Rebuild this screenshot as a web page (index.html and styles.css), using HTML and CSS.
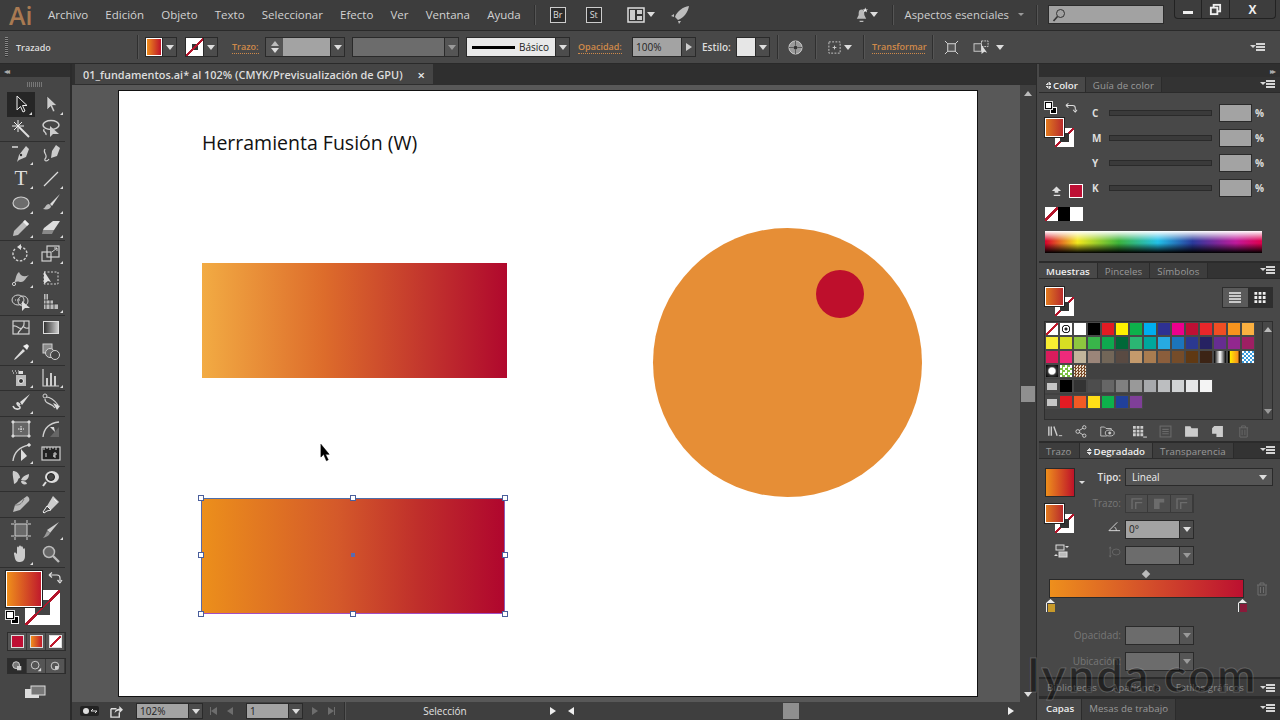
FILE: index.html
```html
<!DOCTYPE html>
<html lang="es">
<head>
  <meta charset="UTF-8">
  <title>Illustrator</title>
  <link rel="stylesheet" href="styles.css">
</head>
<body>
<div class="app">

  <!-- Menu bar -->
  <header class="menubar">
    <span class="logo">Ai</span>
    <nav class="menu">
      <span>Archivo</span><span>Edición</span><span>Objeto</span><span>Texto</span><span>Seleccionar</span><span>Efecto</span><span>Ver</span><span>Ventana</span><span>Ayuda</span>
    </nav>
    <i class="vline menu-div"></i>
    <span class="appbox br">Br</span>
    <span class="appbox st">St</span>
    <svg class="ic layout-ic" viewBox="0 0 18 16"><rect x="1" y="1" width="16" height="14" fill="#333" stroke="#ddd" stroke-width="1.5"/><rect x="3" y="3" width="5" height="10" fill="#ccc" stroke="none"/><rect x="10" y="3" width="5" height="4" fill="#ccc" stroke="none"/><rect x="10" y="9" width="5" height="4" fill="#ccc" stroke="none"/></svg>
    <i class="tri light"></i>
    <svg class="ic rocket" viewBox="0 0 20 20"><path d="M19 1C13 2 7 6 5 12l3 3c6-2 10-8 11-14zM4 9 1 11l3 1zM11 16l-2 3-1-3z" fill="#bdbdbd" stroke="none"/></svg>
    <div class="menu-right">
      <svg class="ic bell" viewBox="0 0 16 18"><path d="M8 3c-3 0-3 3-3 6L3 13h10l-2-4c0-3 0-6-3-6zM6 15h4v1.500H6z" fill="#bbb" stroke="none"/><path d="m12 1 .8 2H15l-1.700 1.300.6 2-1.900-1.200-1.900 1.200.6-2L9 3h2.200z" fill="#eee" stroke="none"/></svg>
      <i class="tri light"></i>
      <i class="vline bell-div"></i>
      <span class="workspace-name">Aspectos esenciales</span>
      <i class="tri small"></i>
      <i class="vline ws-div"></i>
      <div class="search">
        <svg class="ic" viewBox="0 0 14 14"><circle cx="8.500" cy="5.500" r="4" stroke="#333"/><path d="M5.500 8.500 1.500 13" stroke="#333" stroke-width="1.600"/></svg>
      </div>
      <div class="winbtns">
        <span class="winbtn"><i class="min-bar"></i></span>
        <span class="winbtn">
          <svg class="ic" viewBox="0 0 14 14"><rect x="5" y="2" width="7" height="7" stroke="#eee" stroke-width="2"/><rect x="2" y="5" width="7" height="7" fill="#444" stroke="#eee" stroke-width="2"/></svg>
        </span>
        <span class="winbtn close">X</span>
      </div>
    </div>
  </header>

  <!-- Control bar -->
  <div class="controlbar">
    <i class="grip"></i>
    <span class="ctl-title">Trazado</span>
    <i class="vline c-div1"></i>
    <div class="combo c-fill"><span class="mini-fill"></span><b class="drop"><i class="tri light"></i></b></div>
    <div class="combo c-stroke"><span class="mini-stroke"></span><b class="drop"><i class="tri light"></i></b></div>
    <span class="link-label c-trazo">Trazo:</span>
    <div class="combo c-weight">
      <span class="stepper"><i class="tri up"></i><i class="tri light"></i></span>
      <span class="field w-weight"></span>
      <b class="drop"><i class="tri light"></i></b>
    </div>
    <div class="combo off c-var"><span class="field w-var"></span><b class="drop"><i class="tri"></i></b></div>
    <div class="combo c-basic">
      <span class="basic"><i class="basic-line"></i>Básico</span>
      <b class="drop"><i class="tri light"></i></b>
    </div>
    <span class="link-label c-opac">Opacidad:</span>
    <div class="combo c-pct"><span class="field w-pct">100%</span><b class="drop"><i class="tri right"></i></b></div>
    <span class="ctl-label c-estilo">Estilo:</span>
    <div class="combo"><span class="style-box"></span><b class="drop"><i class="tri light"></i></b></div>
    <i class="vline c-div2"></i>
    <svg class="ic c-globe" viewBox="0 0 16 16"><circle cx="8" cy="8" r="7" fill="#999" stroke="#ccc"/><circle cx="8" cy="8" r="2" fill="#333" stroke="none"/><path d="M8 1v5M8 10v5M1 8h5M10 8h5" stroke="#555"/></svg>
    <i class="vline c-div3"></i>
    <svg class="ic c-align" viewBox="0 0 16 16"><rect x="2" y="2" width="12" height="12" stroke="#ccc" stroke-dasharray="2 1.500"/><path d="M6 8h4M8 6v4" stroke="#ccc"/></svg>
    <i class="tri light c-tri1"></i>
    <i class="vline c-div4"></i>
    <span class="link-label c-transf">Transformar</span>
    <i class="vline c-div5"></i>
    <svg class="ic c-t1" viewBox="0 0 16 16"><rect x="4" y="4" width="8" height="8" fill="#555" stroke="#ddd"/><path d="m1 1 3 3M15 1l-3 3M1 15l3-3M15 15l-3-3" stroke="#ddd"/></svg>
    <svg class="ic c-t2" viewBox="0 0 18 16"><rect x="1" y="4" width="8" height="8" fill="#555" stroke="#ccc"/><rect x="9" y="1" width="7" height="6" stroke="#ccc" stroke-dasharray="2 1"/><path d="m9 5 0 10 3-2.500 3 1z" fill="#ddd" stroke="none"/></svg>
    <i class="tri light c-tri2"></i>
    <span class="panel-menu c-menu"><i></i><i></i><i></i></span>
  </div>

  <div class="workspace">

    <!-- Tool panel -->
    <aside class="toolbox">
      <div class="tb-head"><span class="collapse">◂◂</span></div>
      <div class="tb-grip"></div>

      <div class="tgroup">
        <span class="tool active more"><svg class="ic" viewBox="0 0 20 20"><path d="M6 2v14l3.500-3.500L12 18l2-1-2.500-5.500H16z" fill="#222" stroke="#eee"/></svg></span>
        <span class="tool more"><svg class="ic" viewBox="0 0 20 20"><path d="M6 2v14l3.500-3.500L12 18l2-1-2.500-5.500H16z" fill="#ccc" stroke="#333" stroke-width=".6"/></svg></span>
        <span class="tool"><svg class="ic" viewBox="0 0 20 20"><path d="m8 8 10 10" stroke="#ddd" stroke-width="2"/><path d="M7 1v12M1 7h12M3 3l8 8M11 3l-8 8" stroke="#eee"/></svg></span>
        <span class="tool"><svg class="ic" viewBox="0 0 20 20"><ellipse cx="10" cy="6" rx="8" ry="4.500" stroke-width="1.500"/><path d="M3 10c-2 3 3 3 2 6" stroke-width="1.300"/><path d="M9 7v11l3-3h6z" fill="#ccc" stroke="none"/></svg></span>
      </div>

      <div class="tgroup">
        <span class="tool more"><svg class="ic" viewBox="0 0 20 20"><path d="M1 3h6" stroke="#ddd" stroke-width="1.500"/><path d="m15 2 3 3-3 8-7 3-2 2 2-7z" fill="#ccc" stroke="none"/><circle cx="10" cy="11" r="1.200" fill="#333" stroke="none"/></svg></span>
        <span class="tool"><svg class="ic" viewBox="0 0 20 20"><path d="m15 1 4 3-3 8-6 2 1-7z" fill="#ccc" stroke="none"/><path d="M4 5C1 9 8 11 4 15c-1 2 2 3 4 0" stroke-width="1.200"/></svg></span>
        <span class="tool more type-tool">T</span>
        <span class="tool more"><svg class="ic" viewBox="0 0 20 20"><path d="M3 17 17 3" stroke="#ddd" stroke-width="1.300"/></svg></span>
        <span class="tool more"><svg class="ic" viewBox="0 0 20 20"><ellipse cx="10" cy="10" rx="8" ry="6" fill="#6c6c6c" stroke="#ccc" stroke-width="1.200"/></svg></span>
        <span class="tool more"><svg class="ic" viewBox="0 0 20 20"><path d="M19 1 9 11l2 2z" fill="#ddd" stroke="none"/><path d="M8 11c-3 0-3 3-6 5 4 1 8 0 8-3z" fill="#bbb" stroke="none"/></svg></span>
        <span class="tool more"><svg class="ic" viewBox="0 0 20 20"><path d="m14 2 4 4-11 11-5 1 1-5z" fill="#bbb" stroke="none"/><path d="m14 2 4 4-2 2-4-4z" fill="#eee" stroke="none"/></svg></span>
        <span class="tool more"><svg class="ic" viewBox="0 0 20 20"><path d="m12 3 7 0-6 9H2l1-2z" fill="#ddd" stroke="none"/><path d="M2 12h11l-2 4H1z" fill="#888" stroke="none"/></svg></span>
      </div>

      <div class="tgroup">
        <span class="tool more"><svg class="ic" viewBox="0 0 20 20"><path d="M4 6a7 7 0 1 0 6-2" stroke-width="1.400" stroke-dasharray="2.500 1.500"/><path d="m10 1-4 3 4 3z" fill="#ddd" stroke="none"/></svg></span>
        <span class="tool more"><svg class="ic" viewBox="0 0 20 20"><rect x="1" y="9" width="9" height="9" stroke-width="1.200"/><rect x="6" y="3" width="12" height="11" stroke-width="1.200"/><path d="m11 9 5-4M13 5h3v3"/></svg></span>
        <span class="tool more"><svg class="ic" viewBox="0 0 20 20"><path d="M2 16c3-2 2-9 6-12 2 5 6 5 10 3-3 2-4 7-8 7-3 0-3-2-8 2z" fill="#bbb" stroke="none"/><circle cx="3" cy="16" r="1.600" fill="#444"/></svg></span>
        <span class="tool"><svg class="ic" viewBox="0 0 20 20"><rect x="3" y="4" width="14" height="12" stroke-dasharray="2 1.500"/><path d="M3 3v13l4-3 3 1z" fill="#ddd" stroke="none"/></svg></span>
        <span class="tool"><svg class="ic" viewBox="0 0 20 20"><ellipse cx="7" cy="8" rx="6" ry="5"/><circle cx="12" cy="9" r="5"/><path d="M11 9v10l3-3h5z" fill="#ddd" stroke="none"/><path d="M4 8h6" stroke-dasharray="1 1"/></svg></span>
        <span class="tool more"><svg class="ic" viewBox="0 0 20 20"><path d="M3 2h4v6h5v4h5v5H3z" fill="#bbb" stroke="none"/><path d="M5 2v15M9 8v9M13 12v5M3 8h9M3 12h14" stroke="#333" stroke-width=".8"/></svg></span>
      </div>

      <div class="tgroup">
        <span class="tool"><svg class="ic" viewBox="0 0 20 20"><rect x="2" y="3" width="16" height="13" stroke-width="1.200"/><path d="M2 8c5-1 6 4 9 2s2-5 2-7M7 16c0-3 3-4 4-6M13 9c2 2 3 1 5 1" stroke-width="1.100"/></svg></span>
        <span class="tool"><i class="grad-tool"></i></span>
        <span class="tool more"><svg class="ic" viewBox="0 0 20 20"><path d="m12 7-8 9-1 2 2-1 9-8z" fill="#ddd" stroke="none"/><path d="m12 4 4 4 2-4-2-2z" fill="#eee" stroke="none"/></svg></span>
        <span class="tool"><svg class="ic" viewBox="0 0 20 20"><rect x="2" y="2" width="9" height="9" fill="#888"/><circle cx="9" cy="11" r="4.500" fill="#666"/><circle cx="14" cy="13" r="4.500" fill="#444"/></svg></span>
      </div>

      <div class="tgroup">
        <span class="tool more"><svg class="ic" viewBox="0 0 20 20"><rect x="5" y="7" width="10" height="11" fill="#bbb" stroke="none"/><circle cx="10" cy="13" r="2.500" fill="#333" stroke="#eee"/><path d="M1 3h1M4 3h1M7 3h1M2 5h1M5 5h1M7 5h1" stroke="#eee"/><rect x="8" y="3" width="4" height="3" fill="#ddd" stroke="none"/></svg></span>
        <span class="tool more"><svg class="ic" viewBox="0 0 20 20"><path d="M2 1v17h16" stroke-width="1.200"/><path d="M5 10h2v8H5zM9 5h2v13H9zM13 8h2v10h-2z" fill="#ccc" stroke="none"/></svg></span>
      </div>

      <div class="tgroup">
        <span class="tool more"><svg class="ic" viewBox="0 0 20 20"><path d="M2 13c2 5 10 3 6 0C4 10 7 8 9 12" stroke-width="1.600" stroke="#ddd"/><path d="M19 1 9 9l2 3z" fill="#ddd" stroke="none"/></svg></span>
        <span class="tool"><svg class="ic" viewBox="0 0 20 20"><circle cx="4" cy="3" r="2"/><path d="M4 6c0 6 6 3 10 9M5 4c5 0 9 4 12 8" stroke-width="1.200"/><path d="m12 10 7 3-3 4z" fill="#ddd" stroke="none"/></svg></span>
      </div>

      <div class="tgroup">
        <span class="tool"><svg class="ic" viewBox="0 0 20 20"><rect x="2" y="3" width="16" height="14" rx="1" fill="#666" stroke-width="1.200"/><path d="M10 7v6M7 10h6" stroke="#eee" stroke-dasharray="1.500 1"/><path d="M1 2h2v2H1zM17 2h2v2h-2zM1 16h2v2H1zM17 16h2v2h-2z" fill="#eee"/></svg></span>
        <span class="tool"><svg class="ic" viewBox="0 0 20 20"><path d="M2 18C3 9 8 4 18 3" stroke-width="1.300"/><path d="M9 18h9V8z" fill="#666" stroke="none"/><path d="m9 8 5 5-1-5z" fill="#ddd" stroke="none"/></svg></span>
        <span class="tool more"><svg class="ic" viewBox="0 0 20 20"><path d="M2 18C3 9 8 4 18 2M2 18v-1" stroke-width="1.300"/><path d="M10 6v12l6-5z" fill="#ddd" stroke="none"/><circle cx="18" cy="2" r="1.300" fill="#eee"/></svg></span>
        <span class="tool"><svg class="ic" viewBox="0 0 20 20"><rect x="1" y="4" width="18" height="13" fill="#222" stroke-width="1.200"/><path d="M3 4v3M6 4v2M9 4v3M12 4v2M15 4v3M5 14v-4M13 14v-4h2v2h-2v2h2" stroke-width="1"/></svg></span>
      </div>

      <div class="tgroup">
        <span class="tool"><svg class="ic" viewBox="0 0 20 20"><path d="M2 2c3 0 6 2 7 6 0 2-1 0-2 3-1 3-4 4-4 4 0-4-2-9-1-13zM18 5c0 4-2 8-8 6 1-3 4-5 8-6zM10 12c3 0 5 0 6 3-3 1-6 0-6-3z" fill="#ccc" stroke="none"/></svg></span>
        <span class="tool"><svg class="ic" viewBox="0 0 20 20"><ellipse cx="11" cy="8" rx="7" ry="6" fill="#ddd" stroke="none"/><circle cx="10" cy="8" r="3.500" fill="#444" stroke="#222"/><path d="m5 13-3 4" stroke="#ddd" stroke-width="2"/></svg></span>
      </div>

      <div class="tgroup">
        <span class="tool"><svg class="ic" viewBox="0 0 20 20"><path d="M16 2c2 1 3 3 2 5l-9 9-7 2 2-7z" fill="#bbb" stroke="none"/><path d="M4 11c4 0 6 0 9-6" stroke="#777"/></svg></span>
        <span class="tool"><svg class="ic" viewBox="0 0 20 20"><path d="m12 2 6 6-8 8-4-4z" fill="#ccc" stroke="none"/><path d="m6 12 4 4-4 1-3 2-1-1 2-3zM13 5l3 3" stroke="#eee"/></svg></span>
      </div>

      <div class="tgroup">
        <span class="tool"><svg class="ic" viewBox="0 0 20 20"><rect x="4" y="4" width="12" height="12" fill="#6a6a6a" stroke-width="1"/><path d="M4 0v3M16 0v3M4 17v3M16 17v3M0 4h3M0 16h3M17 4h3M17 16h3" stroke-width="1"/></svg></span>
        <span class="tool more"><svg class="ic" viewBox="0 0 20 20"><path d="M18 2 6 10l3 3z" fill="#ccc" stroke="none"/><path d="M6 11c-1 2-2 5-4 7 3-1 6-2 7-5z" fill="#999" stroke="none"/></svg></span>
        <span class="tool more"><svg class="ic" viewBox="0 0 20 20"><path d="M3 9c1-1 2 0 3 1V4c0-2 2-2 2 0V3c0-2 2-2 2 0v0c0-1 2-1 2 1v1c1-1 2-1 2 1v6c0 5-3 6-6 6-4 0-4-4-5-8z" fill="#ccc" stroke="none"/></svg></span>
        <span class="tool"><svg class="ic" viewBox="0 0 20 20"><circle cx="8" cy="8" r="5.500" fill="#666" stroke="#bbb" stroke-width="1.500"/><path d="m12 12 6 6" stroke="#bbb" stroke-width="2.400"/></svg></span>
      </div>

      <!-- Fill and stroke -->
      <div class="fillstroke">
        <span class="big-stroke"><i></i></span>
        <span class="big-fill"></span>
        <svg class="ic fs-swap" viewBox="0 0 14 14"><path d="M1 4h8c2 0 3 1 3 3v3M1 4l3-2.500M1 4l3 2.500M12 12l-2.500-3M12 12l2-3" stroke="#ddd" stroke-width="1.200"/></svg>
        <span class="fs-default"><i></i><i></i></span>
      </div>
      <div class="btnstrip modes">
        <span><i class="mode-red"></i></span><span><i class="mode-grad"></i></span><span><i class="mode-none"></i></span>
      </div>
      <div class="btnstrip draws">
        <span class="on"><svg class="ic" viewBox="0 0 14 14"><circle cx="6" cy="6" r="4" fill="#777" stroke="#ddd"/><rect x="7" y="7" width="5" height="5" fill="#ccc" stroke="none"/></svg></span>
        <span><svg class="ic" viewBox="0 0 14 14"><circle cx="6" cy="6" r="4.500" stroke="#ddd"/><path d="M13 9v4H9z" fill="#ddd" stroke="none"/></svg></span>
        <span><svg class="ic" viewBox="0 0 14 14"><circle cx="7" cy="7" r="4.500" stroke="#ddd"/><rect x="7" y="7" width="4" height="4" fill="#ccc" stroke="none"/></svg></span>
      </div>
      <svg class="ic screen-mode" viewBox="0 0 22 14"><rect x="1" y="4" width="14" height="9" fill="#ddd" stroke="none"/><rect x="7" y="1" width="14" height="9" fill="#777" stroke="#ddd"/></svg>
    </aside>

    <!-- Document -->
    <main class="document">
      <div class="tabbar">
        <div class="doc-tab"><span>01_fundamentos.ai* al 102% (CMYK/Previsualización de GPU)</span><span class="doc-close">×</span></div>
      </div>
      <div class="canvas-row">
        <div class="canvas">
          <div class="artboard">
            <h1 class="art-title">Herramienta Fusión (W)</h1>
            <div class="rect-top"></div>
            <div class="rect-sel">
              <i class="h tl"></i><i class="h tc"></i><i class="h tr"></i>
              <i class="h ml"></i><i class="center-dot"></i><i class="h mr"></i>
              <i class="h bl"></i><i class="h bc"></i><i class="h br-h"></i>
            </div>
            <div class="circle"></div>
            <div class="dot"></div>
            <svg class="cursor" viewBox="0 0 12 20"><path d="M1 1v14l3-3 3 7 2-1-3-6h4z" fill="#000" stroke="#000" stroke-width=".6"/></svg>
          </div>
        </div>
        <div class="vscroll"><i class="tri up sc-up"></i><b class="sc-thumb"></b><i class="tri light sc-down"></i></div>
      </div>
      <footer class="statusbar">
        <svg class="ic st-gear" viewBox="0 0 20 12"><rect x="0" y="1" width="19" height="10" rx="2" fill="#222" stroke="none"/><circle cx="6" cy="6" r="3" fill="#ddd" stroke="none"/><path d="M11 6h6M11 6l2-2M17 6l-2 2" stroke="#ddd"/></svg>
        <svg class="ic st-share" viewBox="0 0 14 14"><path d="M1 4h6M1 4v9h9V8" stroke="#ddd" stroke-width="1.500"/><path d="M5 9c0-4 3-5 5-5V1l4 4-4 4V6C8 6 6 7 5 9z" fill="#ddd" stroke="none"/></svg>
        <div class="combo st-zoom"><span class="field w-zoom">102%</span><b class="drop"><i class="tri light"></i></b></div>
        <span class="st-nav dim"><i class="bar"></i><i class="tri left"></i><i class="tri left gap"></i></span>
        <div class="combo st-page"><span class="field w-page">1</span><b class="drop"><i class="tri light"></i></b></div>
        <span class="st-nav dim next"><i class="tri right"></i><i class="tri right gap"></i><i class="bar"></i></span>
        <i class="vline st-div"></i>
        <span class="st-label">Selección</span>
        <i class="tri right light st-arrow"></i>
        <div class="hscroll"><i class="tri left light"></i><b class="hs-thumb"></b><i class="tri right light"></i></div>
      </footer>
    </main>

    <!-- Panels -->
    <aside class="panels">
      <div class="dock-head"><span class="collapse">▸▸</span></div>

      <section class="panel p-color">
        <div class="tabs">
          <span class="tab on"><em class="updown"></em>Color</span><span class="tab">Guía de color</span>
          <span class="panel-menu"><i></i><i></i><i></i></span>
        </div>
        <div class="color-body">
          <div class="color-left">
            <div class="mini-icons">
              <span class="fs-default small"><i></i><i></i></span>
              <svg class="ic" viewBox="0 0 14 14"><path d="M1 4h8c2 0 3 1 3 3v3M1 4l3-2.500M1 4l3 2.500M12 12l-2.500-3M12 12l2-3" stroke="#ddd" stroke-width="1.200"/></svg>
            </div>
            <div class="stack"><span class="s-stroke"><i></i></span><span class="s-fill"></span></div>
            <div class="warn">
              <svg class="ic" viewBox="0 0 12 12"><path d="M6 1 1 6h3v2h4V6h3zM3 10h7v1.500H3z" fill="#ddd" stroke="none"/></svg>
              <span class="warn-swatch"></span>
            </div>
            <div class="nbw"><i class="n"></i><i class="b"></i><i class="w"></i></div>
          </div>
          <div class="sliders">
            <div class="sl"><b>C</b><i class="track"></i><span class="field"></span><b>%</b></div>
            <div class="sl"><b>M</b><i class="track"></i><span class="field"></span><b>%</b></div>
            <div class="sl"><b>Y</b><i class="track"></i><span class="field"></span><b>%</b></div>
            <div class="sl"><b>K</b><i class="track"></i><span class="field"></span><b>%</b></div>
          </div>
        </div>
        <div class="spectrum"><i></i></div>
      </section>

      <section class="panel p-swatches">
        <div class="tabs">
          <span class="tab on">Muestras</span><span class="tab">Pinceles</span><span class="tab">Símbolos</span>
          <span class="panel-menu"><i></i><i></i><i></i></span>
        </div>
        <div class="sw-head">
          <div class="stack"><span class="s-stroke"><i></i></span><span class="s-fill"></span></div>
          <div class="viewbtns">
            <span class="on"><svg class="ic" viewBox="0 0 14 12"><path d="M1 1.500h12M1 4.500h12M1 7.500h12M1 10.500h12" stroke="#eee" stroke-width="1.500"/></svg></span>
            <span><svg class="ic" viewBox="0 0 14 14"><path d="M1 1h3v3H1zM5.500 1h3v3h-3zM10 1h3v3h-3zM1 5.500h3v3H1zM5.500 5.500h3v3h-3zM10 5.500h3v3h-3zM1 10h3v3H1zM5.500 10h3v3h-3zM10 10h3v3h-3z" fill="#eee" stroke="none"/></svg></span>
          </div>
        </div>
        <div class="sw-list">
          <div class="sw-grid">
            <div class="sw-row">
              <i class="sw none"></i><i class="sw target"></i><i class="sw" style="background:#fff"></i><i class="sw" style="background:#000"></i><i class="sw" style="background:#e31b23"></i><i class="sw" style="background:#fff200"></i><i class="sw" style="background:#0db14b"></i><i class="sw" style="background:#00aeef"></i><i class="sw" style="background:#2e3192"></i><i class="sw" style="background:#ec008c"></i><i class="sw" style="background:#be0f34"></i><i class="sw" style="background:#e8262a"></i><i class="sw" style="background:#ef4e23"></i><i class="sw" style="background:#f7941d"></i><i class="sw" style="background:#fbb040"></i>
            </div>
            <div class="sw-row">
              <i class="sw" style="background:#f9ed32"></i><i class="sw" style="background:#d7df23"></i><i class="sw" style="background:#8dc63f"></i><i class="sw" style="background:#39b54a"></i><i class="sw" style="background:#0fa94f"></i><i class="sw" style="background:#006838"></i><i class="sw" style="background:#2bb673"></i><i class="sw" style="background:#00a79d"></i><i class="sw" style="background:#27aae1"></i><i class="sw" style="background:#1c75bc"></i><i class="sw" style="background:#2b3990"></i><i class="sw" style="background:#262262"></i><i class="sw" style="background:#662d91"></i><i class="sw" style="background:#92278f"></i><i class="sw" style="background:#9e1f63"></i>
            </div>
            <div class="sw-row">
              <i class="sw" style="background:#da1c5c"></i><i class="sw" style="background:#ee2a7b"></i><i class="sw" style="background:#c2b59b"></i><i class="sw" style="background:#9b8579"></i><i class="sw" style="background:#726658"></i><i class="sw" style="background:#594a42"></i><i class="sw" style="background:#c49a6c"></i><i class="sw" style="background:#a97c50"></i><i class="sw" style="background:#8b5e3c"></i><i class="sw" style="background:#754c29"></i><i class="sw" style="background:#603913"></i><i class="sw" style="background:#3c2415"></i><i class="sw g-bw"></i><i class="sw g-yo"></i><i class="sw g-check"></i>
            </div>
            <div class="sw-row gap1">
              <i class="sw p-dot"></i><i class="sw p-green"></i><i class="sw p-brown"></i>
            </div>
            <div class="sw-row gap2">
              <i class="sw folder"></i><i class="sw" style="background:#000"></i><i class="sw" style="background:#333"></i><i class="sw" style="background:#4d4d4d"></i><i class="sw" style="background:#666"></i><i class="sw" style="background:#808080"></i><i class="sw" style="background:#999"></i><i class="sw" style="background:#a7a9ac"></i><i class="sw" style="background:#bcbec0"></i><i class="sw" style="background:#d1d3d4"></i><i class="sw" style="background:#e6e7e8"></i><i class="sw" style="background:#f4f4f4"></i>
            </div>
            <div class="sw-row">
              <i class="sw folder"></i><i class="sw" style="background:#e31b23"></i><i class="sw" style="background:#f15a24"></i><i class="sw" style="background:#ffde17"></i><i class="sw" style="background:#0db14b"></i><i class="sw" style="background:#21409a"></i><i class="sw" style="background:#7f3f98"></i>
            </div>
          </div>
          <div class="sw-scroll"><i class="tri up"></i><i class="tri"></i></div>
        </div>
        <div class="sw-foot">
          <svg class="ic" viewBox="0 0 18 14"><path d="M1 1v11M4 1v11M7 1l4 11" stroke="#ccc" stroke-width="1.700"/><path d="M13 12h4" stroke="#ddd"/></svg>
          <svg class="ic" viewBox="0 0 14 14"><circle cx="3" cy="7" r="2"/><circle cx="10" cy="2.500" r="1.800"/><circle cx="10" cy="11.500" r="1.800"/><path d="M4.500 6 8.500 3.500M4.500 8l4 2.500"/></svg>
          <svg class="ic" viewBox="0 0 20 14"><path d="M1 3V1h5l2 2h7v2M1 3v10h8" stroke-width="1.100"/><ellipse cx="13" cy="9" rx="6" ry="4" stroke-width="1.100"/><circle cx="13" cy="9" r="1.500" fill="#ccc"/></svg>
          <svg class="ic foot-gap" viewBox="0 0 16 14"><path d="M1 1h3v3H1zM5 1h3v3H5zM9 1h3v3H9zM1 5h3v3H1zM5 5h3v3H5zM9 5h3v3H9zM1 9h3v3H1zM5 9h3v3H5zM9 9h3v3H9z" fill="#ccc" stroke="none"/><path d="M12 13h4" stroke="#ddd"/></svg>
          <svg class="ic dimic" viewBox="0 0 12 12"><rect x="1" y="1" width="10" height="10"/><path d="M3 4h6M3 6h6M3 8h6"/></svg>
          <svg class="ic" viewBox="0 0 14 12"><path d="M1 3V1h5l1 2h6v8H1z" fill="#ccc" stroke="none"/></svg>
          <svg class="ic" viewBox="0 0 12 12"><path d="M3 1h8v10H5V8H1V3z" fill="#ccc" stroke="none"/></svg>
          <svg class="ic dimic" viewBox="0 0 12 14"><path d="M1 3h10M4 3V1h4v2M2 3v10h8V3M4.500 5v6M7.500 5v6"/></svg>
        </div>
      </section>

      <section class="panel p-gradient">
        <div class="tabs">
          <span class="tab">Trazo</span><span class="tab on"><em class="updown"></em>Degradado</span><span class="tab">Transparencia</span>
          <span class="panel-menu"><i></i><i></i><i></i></span>
        </div>
        <div class="grad-main">
          <div class="grad-left">
            <div class="grad-thumb-row"><span class="grad-thumb"></span><i class="tri light small"></i></div>
            <div class="stack"><span class="s-stroke"><i></i></span><span class="s-fill"></span></div>
            <svg class="ic grad-rev" viewBox="0 0 16 14"><rect x="3" y="1" width="8" height="5" fill="#555" stroke="#ddd"/><rect x="6" y="8" width="8" height="5" fill="#bbb" stroke="#ddd"/><path d="M12 2h4l-2 2zM1 12h4L3 10z" fill="#ddd" stroke="none"/></svg>
          </div>
          <div class="grad-form">
            <div class="g-row"><label class="lit">Tipo:</label><div class="g-select"><span>Lineal</span><i class="tri light"></i></div></div>
            <div class="g-row"><label>Trazo:</label>
              <div class="stroke-btns">
                <span><svg class="ic" viewBox="0 0 14 14"><path d="M2 13V2h11M6 13V6h7" stroke="#6c6c6c" stroke-width="1.500"/></svg></span>
                <span><svg class="ic" viewBox="0 0 14 14"><path d="M2 2h11v4H8v7H2z" fill="#6c6c6c" stroke="none"/></svg></span>
                <span><svg class="ic" viewBox="0 0 14 14"><path d="M2 13V2h11M6 13V6h7" stroke="#6c6c6c" stroke-width="1.500"/></svg></span>
              </div>
            </div>
            <div class="g-row">
              <label><svg class="ic angle" viewBox="0 0 14 12"><path d="M13 11H1L10 2M9 11c0-2-1-3-2-4" stroke="#ddd"/></svg></label>
              <div class="combo g-num"><span class="field">0°</span><b class="drop"><i class="tri light"></i></b></div>
            </div>
            <div class="g-row">
              <label><svg class="ic angle dimic" viewBox="0 0 14 14"><path d="M2 1v12M1 3l1-2 1 2M1 11l1 2 1-2" /><ellipse cx="9" cy="7" rx="4.500" ry="3.500"/></svg></label>
              <div class="combo g-num off"><span class="field"></span><b class="drop"><i class="tri"></i></b></div>
            </div>
          </div>
        </div>
        <div class="grad-diamond"><i></i></div>
        <div class="grad-slider">
          <div class="grad-bar"></div>
          <svg class="ic grad-trash" viewBox="0 0 12 14"><path d="M1 3h10M4 3V1h4v2M2 3v10h8V3M4.500 5v6M7.500 5v6" stroke="#6e6e6e"/></svg>
        </div>
        <div class="grad-stops"><i class="stop s1"></i><i class="stop s2"></i></div>
        <div class="grad-lower">
          <div class="g-row"><label>Opacidad:</label><div class="combo g-num off"><span class="field"></span><b class="drop"><i class="tri"></i></b></div></div>
          <div class="g-row"><label>Ubicación:</label><div class="combo g-num off"><span class="field"></span><b class="drop"><i class="tri"></i></b></div></div>
        </div>
      </section>

      <section class="panel p-lib">
        <div class="tabs">
          <span class="tab">Bibliotecas</span><span class="tab">Apariencia</span><span class="tab">Estilos gráficos</span>
          <span class="panel-menu"><i></i><i></i><i></i></span>
        </div>
      </section>
      <section class="panel p-layers">
        <div class="tabs">
          <span class="tab on">Capas</span><span class="tab">Mesas de trabajo</span>
          <span class="panel-menu"><i></i><i></i><i></i></span>
        </div>
      </section>
    </aside>
  </div>

  <!-- Video watermark -->
  <div class="watermark">lynda.com</div>
</div>
</body>
</html>
```

FILE: styles.css
```css
* {
  box-sizing: border-box;
}

html, body {
  margin: 0;
  height: 100%;
  overflow: hidden;
}

body {
  font-family: "Open Sans", "Noto Sans", sans-serif;
  font-size: 10px;
  color: #ccc;
  background: #484848;
}

i, em, b {
  font-style: normal;
  display: block;
  flex: none;
}

.app {
  position: relative;
  width: 1280px;
  height: 720px;
  display: flex;
  flex-direction: column;
  overflow: hidden;
}

.ic {
  display: block;
  flex: none;
  width: 100%;
  height: 100%;
  fill: none;
  stroke: #d0d0d0;
  stroke-width: 1;
  overflow: visible;
}

.vline {
  width: 1px;
  background: #2f2f2f;
  border-right: 1px solid #555;
  box-sizing: content-box;
}

/* little triangles */
.tri {
  width: 0;
  height: 0;
  border-left: 4px solid transparent;
  border-right: 4px solid transparent;
  border-top: 5px solid #9a9a9a;
}
.tri.light { border-top-color: #ddd; }
.tri.small { border-left-width: 3px; border-right-width: 3px; border-top-width: 3px; }
.tri.up { border-top: 0; border-bottom: 5px solid #bbb; }
.tri.right { border: 4px solid transparent; border-left: 6px solid #ccc; border-right: 0; }
.tri.left { border: 4px solid transparent; border-right: 6px solid #ccc; border-left: 0; }
.tri.right.light { border-left-color: #eee; }
.tri.left.light { border-right-color: #eee; }

/* Menu bar */
.menubar {
  height: 31px;
  flex: none;
  display: flex;
  align-items: center;
  background: #3d3d3d;
  border-bottom: 1px solid #2a2a2a;
  padding: 0 0 1px 9px;
}
.logo {
  width: 39px;
  font-size: 25px;
  font-weight: 600;
  color: #a97a52;
  line-height: 28px;
}
.menu {
  display: flex;
  gap: 17.200px;
  font-size: 11.500px;
  color: #d2d2d2;
}
.menu-div { height: 20px; margin-left: 13px; }
.appbox {
  width: 16px;
  height: 16px;
  border: 1px solid #ccc;
  background: #2c2c2c;
  color: #ddd;
  font-size: 9px;
  line-height: 14px;
  text-align: center;
}
.br { margin-left: 14px; }
.st { margin-left: 20px; }
.layout-ic { width: 18px; height: 16px; margin-left: 25px; margin-right: 1px; }
.menubar > .tri { margin-left: 1px; }
.rocket { width: 20px; height: 20px; margin-left: 15px; }
.menu-right {
  margin-left: auto;
  display: flex;
  align-items: center;
  height: 100%;
}
.bell { width: 15px; height: 18px; }
.menu-right > .tri.light { margin-left: 1px; }
.bell-div { height: 20px; margin-left: 14px; }
.workspace-name { margin-left: 11px; font-size: 11.300px; color: #cfcfcf; white-space: nowrap; }
.menu-right .tri.small { margin-left: 9px; }
.ws-div { height: 20px; margin-left: 12px; }
.search {
  width: 116px;
  height: 19px;
  margin-left: 10px;
  background: #a2a2a2;
  border: 1px solid #2b2b2b;
  padding: 2px 0 2px 3px;
}
.search .ic { width: 14px; height: 14px; }
.winbtns {
  align-self: flex-start;
  display: flex;
  height: 19px;
  width: 102px;
  margin-left: 10px;
  margin-right: 4px;
  border: 1px solid #222;
  border-top: 0;
  border-radius: 0 0 4px 4px;
}
.winbtn {
  flex: 1;
  display: flex;
  align-items: center;
  justify-content: center;
  border-right: 1px solid #222;
}
.winbtn .ic { width: 13px; height: 13px; }
.min-bar { width: 10px; height: 3px; background: #eee; margin-top: 6px; }
.close { flex: 1.700; border: 0; font-size: 12px; font-weight: 700; color: #eee; }

/* Control bar */
.controlbar {
  height: 33px;
  flex: none;
  display: flex;
  align-items: center;
  background: #484848;
  border-bottom: 1px solid #2a2a2a;
}
.grip {
  width: 3px;
  height: 20px;
  margin-left: 5px;
  background: repeating-linear-gradient(#888 0 1px, #333 1px 2px);
}
.ctl-title { margin-left: 8px; font-weight: 600; color: #ddd; width: 46px; font-size: 9px; }
.ctl-label { font-weight: 600; color: #ddd; font-size: 10px; }
.c-div1 { height: 24px; margin-left: 75px; }
.combo {
  display: flex;
  align-items: stretch;
  height: 20px;
  border: 1px solid #2a2a2a;
  background: #3c3c3c;
}
.drop {
  width: 14px;
  display: flex;
  align-items: center;
  justify-content: center;
  background: #4c4c4c;
  border-left: 1px solid #2a2a2a;
}
.field {
  display: block;
  background: #a3a3a3;
  color: #222;
  font-size: 10px;
  line-height: 18px;
  padding-left: 3px;
}
.off .field { background: #6c6c6c; }
.off .drop { background: #555; }
.c-fill { margin-left: 6px; }
.mini-fill {
  width: 16px;
  background: linear-gradient(90deg, #ee8f1c, #be1229);
  border: 1px solid #fff;
}
.mini-stroke {
  width: 17px;
  background:
    linear-gradient(135deg, transparent 47%, #b3142a 47% 55%, transparent 55%),
    linear-gradient(#333, #333) center / 6px 6px no-repeat,
    #fff;
}
.c-stroke { margin-left: 8px; }
.link-label {
  color: #d08a4a;
  font-size: 9px;
  font-weight: 600;
  border-bottom: 1px dotted #d08a4a;
  line-height: 12px;
  white-space: nowrap;
}
.c-trazo { margin-left: 14px; width: 27px; }
.c-weight { margin-left: 6px; }
.stepper {
  width: 17px;
  display: flex;
  flex-direction: column;
  align-items: center;
  justify-content: space-evenly;
  background: #555;
}
.w-weight { width: 47px; }
.w-var { width: 91px; }
.c-var { margin-left: 7px; }
.c-basic { margin-left: 7px; }
.basic {
  width: 88px;
  background: #e9e9e9;
  color: #222;
  font-size: 10px;
  line-height: 18px;
  display: flex;
  align-items: center;
  gap: 4px;
  padding-left: 5px;
}
.basic-line { width: 43px; height: 3px; background: #000; }
.c-opac { margin-left: 8px; width: 44px; }
.c-pct { margin-left: 10px; }
.w-pct { width: 48px; }
.c-estilo { margin-left: 6px; width: 34px; }
.style-box { width: 18px; background: #e6e6e6; }
.c-div2 { height: 24px; margin-left: 7px; }
.c-globe { width: 15px; height: 15px; margin-left: 9px; }
.c-div3 { height: 24px; margin-left: 12px; }
.c-align { width: 15px; height: 15px; margin-left: 10px; }
.c-tri1 { margin-left: 2px; }
.c-div4 { height: 24px; margin-left: 11px; }
.c-transf { margin-left: 7px; width: 53px; }
.c-div5 { height: 24px; margin-left: 7px; }
.c-t1 { width: 15px; height: 15px; margin-left: 10px; }
.c-t2 { width: 17px; height: 15px; margin-left: 14px; }
.c-tri2 { margin-left: 6px; }
.c-menu { margin-left: auto; margin-right: 15px; }

.panel-menu {
  width: 9px;
  display: flex;
  flex-direction: column;
  gap: 1px;
  position: relative;
}
.panel-menu i { height: 2px; background: #d5d5d5; }
.panel-menu::before {
  content: '';
  position: absolute;
  left: -6px;
  top: 2px;
  border: 3px solid transparent;
  border-top: 3px solid #d5d5d5;
  border-bottom: 0;
}

/* Workspace */
.workspace {
  flex: 1;
  display: flex;
  min-height: 0;
}

/* Tool panel */
.toolbox {
  width: 72px;
  flex: none;
  background: #464646;
  border-right: 2px solid #2b2b2b;
}
.tb-head {
  height: 13px;
  background: #2f2f2f;
  padding-left: 4px;
}
.collapse { font-size: 8px; line-height: 13px; color: #aaa; letter-spacing: -2px; display: block; }
.tb-grip {
  height: 15px;
  background: repeating-linear-gradient(90deg, #777 0 1px, transparent 1px 2px) center / 16px 5px no-repeat;
}
.tgroup {
  display: grid;
  grid-template-columns: 30px 30px;
  grid-auto-rows: 24.500px;
  padding-left: 6px;
  margin-right: 5px;
  border-bottom: 1px solid #2f2f2f;
}
.tool {
  position: relative;
  display: flex;
  align-items: center;
  justify-content: center;
}
.tool .ic { width: 20px; height: 20px; }
.tool.active { background: #262626; margin: 0 0 0 1px; width: 28px; }
.tool.more::after {
  content: '';
  position: absolute;
  right: 3px;
  bottom: 2px;
  border-left: 3px solid transparent;
  border-bottom: 3px solid #ddd;
}
.type-tool {
  font-family: "Liberation Serif", serif;
  font-size: 21px;
  color: #ddd;
}
.grad-tool {
  width: 16px;
  height: 13px;
  border: 1px solid #ddd;
  background: linear-gradient(90deg, #333, #ccc);
}

/* Fill and stroke */
.fillstroke {
  position: relative;
  height: 62px;
  margin-top: 1px;
}
.big-fill {
  position: absolute;
  left: 6px;
  top: 2px;
  width: 36px;
  height: 36px;
  border: 1px solid #fff;
  background: linear-gradient(90deg, #ef8f1b, #c01a2c);
  box-shadow: 0 0 0 1px #222;
}
.big-stroke {
  position: absolute;
  left: 25px;
  top: 21px;
  width: 35px;
  height: 35px;
  background: linear-gradient(135deg, transparent 48.500%, #b3142a 48.500% 53%, transparent 53%), #fff;
  padding: 10px;
}
.big-stroke i { height: 100%; background: linear-gradient(135deg, #444 48.500%, #b3142a 48.500% 56%, #444 56%); }
.fs-swap { position: absolute; left: 48px; top: 2px; width: 14px; height: 14px; }
.fs-default { position: absolute; left: 6px; top: 42px; width: 13px; height: 13px; }
.fs-default i { position: absolute; width: 8px; height: 8px; border: 1px solid #fff; background: #000; }
.fs-default i:first-child { right: 0; bottom: 0; }
.fs-default i:last-child { left: 0; top: 0; background: #fff; border-color: #000; outline: 1px solid #ddd; }
.btnstrip {
  display: flex;
  margin-left: 7px;
  width: 59px;
  border: 1px solid #2d2d2d;
  background: #555;
}
.btnstrip span {
  flex: 1;
  display: flex;
  align-items: center;
  justify-content: center;
  border-right: 1px solid #3a3a3a;
}
.modes { height: 19px; margin-top: 1px; }
.draws { height: 16px; margin-top: 7px; }
.draws span.on { background: #2c2c2c; }
.draws .ic { width: 12px; height: 12px; }
.modes i { width: 13px; height: 13px; border: 1px solid #ddd; }
.mode-red { background: #be0f34; }
.mode-grad { background: linear-gradient(90deg, #ef8f1b, #c01a2c); }
.mode-none { background: linear-gradient(135deg, #fff 42%, #c01a2c 42% 58%, #fff 58%); }
.screen-mode { width: 22px; height: 14px; margin: 11px 0 0 24px; }

/* Document */
.document {
  flex: 1;
  min-width: 0;
  display: flex;
  flex-direction: column;
}
.tabbar {
  height: 20px;
  flex: none;
  background: #2f2f2f;
  padding-left: 3px;
}
.doc-tab {
  width: 358px;
  height: 20px;
  display: flex;
  justify-content: space-between;
  align-items: center;
  background: #454545;
  padding: 1px 8px 0;
  font-size: 10.900px;
  font-weight: 600;
  color: #ddd;
  white-space: nowrap;
}
.doc-close { font-size: 13px; color: #eee; }
.canvas-row {
  flex: 1;
  min-height: 0;
  display: flex;
}
.canvas {
  flex: 1;
  background: #585858;
  padding: 5px 0 0 46px;
  border-top: 1px solid #2e2e2e;
}
.artboard {
  position: relative;
  width: 860px;
  height: 607px;
  background: #fff;
  border: 1px solid #111;
}
.art-title {
  position: absolute;
  left: 83px;
  top: 38px;
  margin: 0;
  font-family: "Open Sans", sans-serif;
  font-size: 19.500px;
  font-weight: 400;
  color: #111;
  white-space: nowrap;
}
.rect-top {
  position: absolute;
  left: 83px;
  top: 172px;
  width: 305px;
  height: 115px;
  background: linear-gradient(90deg, #f2ab43, #dd6c2b 40%, #c3372d 72%, #b0082d);
}
.rect-sel {
  position: absolute;
  left: 82px;
  top: 407px;
  width: 304px;
  height: 116px;
  background: linear-gradient(90deg, #ec8f1b, #d4592a 45%, #bf2e2b 72%, #b0062e);
  border: 1px solid;
  border-color: #4f6ea8 #8a5cb8 #a24fc4 #5a6aa8;
}
.h {
  position: absolute;
  width: 6px;
  height: 6px;
  background: #fff;
  border: 1px solid #4a5f9c;
}
.tl { left: -4px; top: -4px; }
.tc { left: 148px; top: -4px; }
.tr { right: -4px; top: -4px; }
.ml { left: -4px; top: 53px; }
.mr { right: -4px; top: 53px; }
.bl { left: -4px; bottom: -4px; }
.bc { left: 148px; bottom: -4px; }
.br-h { right: -4px; bottom: -4px; }
.center-dot {
  position: absolute;
  left: 149px;
  top: 54px;
  width: 4px;
  height: 4px;
  background: #5a6ab0;
}
.circle {
  position: absolute;
  left: 534px;
  top: 137px;
  width: 269px;
  height: 269px;
  border-radius: 50%;
  background: #e68e36;
}
.dot {
  position: absolute;
  left: 697px;
  top: 179px;
  width: 48px;
  height: 48px;
  border-radius: 50%;
  background: #be0f2c;
}
.cursor {
  position: absolute;
  left: 201px;
  top: 352px;
  width: 11px;
  height: 19px;
}

.vscroll {
  width: 16px;
  flex: none;
  position: relative;
  background: #3f3f3f;
  border-top: 1px solid #2e2e2e;
}
.sc-up { position: absolute; left: 4px; top: 6px; }
.sc-down { position: absolute; left: 4px; bottom: 5px; }
.sc-thumb {
  position: absolute;
  left: 1px;
  top: 301px;
  width: 14px;
  height: 16px;
  background: #8f8f8f;
}

/* Status bar */
.statusbar {
  height: 18px;
  flex: none;
  display: flex;
  align-items: center;
  background: #3f3f3f;
  padding-left: 8px;
}
.st-gear { width: 20px; height: 12px; }
.st-share { width: 13px; height: 13px; margin-left: 10px; }
.statusbar .combo { height: 16px; }
.statusbar .field { line-height: 14px; font-size: 10px; }
.st-zoom { margin-left: 13px; }
.w-zoom { width: 51px; }
.st-nav { display: flex; align-items: center; width: 36px; margin-left: 7px; }
.st-nav .gap { margin-left: 10px; }
.st-nav .bar { width: 1px; height: 8px; background: #6d6d6d; }
.st-nav.next { width: 30px; margin-left: 9px; }
.dim .tri.left { border-right-color: #6d6d6d; }
.dim .tri.right { border-left-color: #6d6d6d; }
.w-page { width: 41px; }
.st-div { height: 18px; margin-left: 2px; }
.st-label { width: 198px; text-align: center; font-size: 10px; color: #e2e2e2; }
.st-arrow { margin-left: 6px; }
.hscroll {
  flex: 1;
  display: flex;
  align-items: center;
  position: relative;
  margin: 0 16px 0 12px;
  padding-right: 6px;
  justify-content: space-between;
  height: 100%;
}
.hs-thumb {
  position: absolute;
  left: 215px;
  top: 1px;
  width: 16px;
  height: 16px;
  background: #8f8f8f;
}

/* Panels */
.panels {
  width: 244px;
  flex: none;
  display: flex;
  flex-direction: column;
  background: #484848;
  padding-left: 2px;
  border-left: 1px solid #2b2b2b;
}
.dock-head {
  height: 13px;
  flex: none;
  background: #2f2f2f;
  text-align: right;
  padding-right: 6px;
}
.panel { flex: none; border-bottom: 2px solid #2b2b2b; }
.tabs {
  height: 16px;
  display: flex;
  align-items: stretch;
  background: #333;
  border-bottom: 1px solid #2b2b2b;
  font-size: 9.700px;
  color: #999;
  position: relative;
}
.tab {
  padding: 0 7px;
  line-height: 17px;
  border-right: 1px solid #2b2b2b;
  letter-spacing: .1px;
  white-space: nowrap;
  background: #3d3d3d;
}
.tab.on { background: #484848; color: #eee; font-weight: 600; letter-spacing: 0; }
.updown {
  display: inline-block;
  width: 5px;
  height: 9px;
  margin-right: 2px;
  vertical-align: -1px;
  background:
    linear-gradient(135deg, transparent 50%, #ddd 50%) left top / 50% 4px no-repeat,
    linear-gradient(225deg, transparent 50%, #ddd 50%) right top / 50% 4px no-repeat,
    linear-gradient(45deg, transparent 50%, #ddd 50%) left bottom / 50% 4px no-repeat,
    linear-gradient(315deg, transparent 50%, #ddd 50%) right bottom / 50% 4px no-repeat;
}
.tabs .panel-menu {
  position: absolute;
  right: 5px;
  top: 3px;
}

/* shared fill/stroke stack */
.stack { position: relative; width: 30px; height: 30px; flex: none; }
.s-fill {
  position: absolute;
  left: 0;
  top: 0;
  width: 19px;
  height: 19px;
  border: 1px solid #fff;
  background: linear-gradient(90deg, #e07a1f, #b92a2c);
  box-shadow: 0 0 0 1px #222;
}
.s-stroke {
  position: absolute;
  left: 10px;
  top: 10px;
  width: 19px;
  height: 19px;
  padding: 5px;
  background: linear-gradient(135deg, transparent 47%, #b3142a 47% 55%, transparent 55%), #fff;
}
.s-stroke i { height: 100%; background: #333; }

/* Color panel */
.p-color { height: 186px; }
.color-body { display: flex; height: 130px; }
.color-left { width: 53px; padding: 8px 0 0 6px; flex: none; }
.mini-icons { display: flex; gap: 8px; height: 14px; align-items: center; }
.mini-icons .ic { width: 12px; height: 12px; }
.fs-default.small { position: relative; left: 0; top: 0; width: 12px; height: 12px; }
.fs-default.small i { width: 7px; height: 7px; }
.color-left .stack { margin-top: 3px; }
.warn {
  display: flex;
  align-items: center;
  gap: 7px;
  margin: 36px 0 0 6px;
  height: 14px;
}
.warn .ic { width: 11px; height: 12px; }
.warn-swatch { width: 14px; height: 14px; background: #be0f34; border: 1px solid #fff; flex: none; }
.nbw { display: flex; width: 38px; height: 14px; margin-top: 9px; }
.nbw i { flex: 1; }
.nbw .n { background: linear-gradient(135deg, #fff 42%, #b3142a 42% 56%, #fff 56%); }
.nbw .b { background: #000; }
.nbw .w { background: #fff; }
.sliders { flex: 1; padding-top: 11px; }
.sl {
  height: 25px;
  display: flex;
  align-items: flex-start;
  color: #ddd;
}
.sl b { font-size: 10px; font-weight: 700; width: 14px; line-height: 18px; }
.sl .track {
  width: 103px;
  height: 6px;
  margin: 6px 7px 0 3px;
  background: #3a3a3a;
  border: 1px solid #2a2a2a;
}
.sl .field { width: 33px; height: 18px; border: 1px solid #2a2a2a; margin-right: 3px; }
.spectrum { height: 22px; margin: 8px 0 0 6px; width: 217px; }
.spectrum i {
  height: 100%;
  background:
    linear-gradient(#0000 55%, #000 100%),
    linear-gradient(#fff 0, #fff0 45%),
    linear-gradient(90deg, #d8002c, #f2e81e 15%, #3cb43c 34%, #22c0e8 52%, #2a3a9c 68%, #c01a9c 88%, #e0004c);
}

/* Swatches panel */
.p-swatches { height: 180px; }
.sw-head {
  height: 42px;
  display: flex;
  justify-content: space-between;
  padding: 8px 7px 0 6px;
}
.viewbtns {
  display: flex;
  width: 51px;
  height: 21px;
  border: 1px solid #2e2e2e;
  background: #2e2e2e;
}
.viewbtns span { flex: 1; display: flex; align-items: center; justify-content: center; }
.viewbtns .on { background: #5a5a5a; }
.viewbtns .ic { width: 14px; height: 13px; }
.sw-list {
  display: flex;
  margin-left: 5px;
  width: 229px;
  height: 99px;
  background: #414141;
  border: 1px solid #2e2e2e;
}
.sw-grid { width: 217px; }
.sw-row { display: flex; height: 14px; }
.gap1 { margin-bottom: 1px; }
.gap2 { margin-bottom: 2px; }
.sw {
  width: 14px;
  height: 14px;
  border: 1px solid #484848;
}
.sw.none { background: linear-gradient(135deg, #fff 44%, #c01a2c 44% 56%, #fff 56%); }
.sw.target { background: radial-gradient(circle, #222 0 1px, #fff 2px 3px, #222 3.500px 4px, #fff 4.500px); }
.g-bw { background: linear-gradient(90deg, #000, #fff 50%, #000); }
.g-yo { background: linear-gradient(90deg, #000 10%, #ffe600 20%, #f7941d 80%, #000); }
.g-check {
  background: repeating-conic-gradient(#3a9bdc 0 25%, #fff 0 50%) 0 0 / 4px 4px;
}
.p-dot { background: radial-gradient(circle, #fff 0 3px, #333 4.500px, #000); }
.p-green { background: repeating-conic-gradient(#7ac143 0 25%, #fff 0 50%) 0 0 / 5px 5px; }
.p-brown { background: repeating-conic-gradient(#7b4a2a 0 25%, #e8dcc8 0 50%) 0 0 / 3px 3px; }
.folder {
  background: linear-gradient(#c6c6c6, #c6c6c6) center 3px / 10px 7px no-repeat, #484848;
}
.sw-scroll {
  flex: 1;
  display: flex;
  flex-direction: column;
  align-items: center;
  justify-content: space-between;
  padding: 5px 0;
  background: #484848;
  border-left: 1px solid #2e2e2e;
}
.sw-foot {
  display: flex;
  align-items: center;
  height: 20px;
  margin-top: 1px;
  padding-left: 9px;
  gap: 11px;
}
.sw-foot .ic { width: 15px; height: 13px; }
.sw-foot .foot-gap { margin-left: 6px; }
.dimic { stroke: #6e6e6e; opacity: .9; }

/* Gradient panel */
.p-gradient { height: 236px; }
.grad-main { display: flex; height: 110px; }
.grad-left { width: 40px; flex: none; padding: 9px 0 0 6px; }
.grad-thumb-row { display: flex; align-items: center; gap: 4px; }
.grad-thumb {
  width: 30px;
  height: 29px;
  flex: none;
  background: linear-gradient(90deg, #ee8f1c, #be1229);
  border: 1px solid #2a2a2a;
}
.grad-left .stack { margin-top: 7px; }
.grad-rev { width: 16px; height: 14px; margin: 10px 0 0 8px; }
.grad-form { flex: 1; padding-top: 9px; }
.g-row {
  display: flex;
  align-items: flex-start;
  height: 26px;
}
.g-row label {
  width: 46px;
  padding-right: 4px;
  line-height: 18px;
  font-size: 10px;
  color: #777;
  flex: none;
  display: flex;
  justify-content: flex-end;
  align-items: center;
  white-space: nowrap;
}
.g-row label.lit { color: #e2e2e2; font-weight: 600; }
.g-select {
  width: 148px;
  height: 18px;
  display: flex;
  justify-content: space-between;
  align-items: center;
  padding: 0 5px 0 6px;
  background: #555;
  border: 1px solid #2a2a2a;
  color: #eee;
  font-size: 10px;
}
.stroke-btns { display: flex; width: 69px; height: 19px; border: 1px solid #3a3a3a; }
.stroke-btns span { flex: 1; padding: 2px; border-right: 1px solid #3a3a3a; background: #4e4e4e; }
.g-num { height: 19px; width: 69px; }
.g-num .field { flex: 1; line-height: 17px; }
.angle { width: 13px; height: 12px; }
.grad-diamond { height: 10px; padding: 2px 0 0 104px; }
.grad-diamond i { width: 6px; height: 6px; background: #bbb; transform: rotate(45deg); }
.grad-slider {
  display: flex;
  align-items: center;
  padding-left: 10px;
  height: 19px;
  gap: 12px;
}
.grad-bar {
  width: 195px;
  height: 19px;
  flex: none;
  background: linear-gradient(90deg, #ee8f1c, #d4502a 50%, #bc1030);
  border: 1px solid #2a2a2a;
}
.grad-trash { width: 12px; height: 14px; }
.grad-stops { display: flex; justify-content: space-between; width: 201px; margin: 1px 0 0 7px; height: 13px; }
.stop {
  width: 9px;
  height: 13px;
  background: #eee;
  position: relative;
  clip-path: polygon(50% 0, 100% 30%, 100% 100%, 0 100%, 0 30%);
}
.stop::after {
  content: '';
  position: absolute;
  left: 1px;
  top: 4px;
  width: 7px;
  height: 8px;
  border: 1px solid #444;
}
.s1::after { background: #c89a2a; }
.s2::after { background: #8a1a3a; }
.grad-lower { padding: 14px 0 0 30px; }
.grad-lower .g-row label { width: 56px; }

/* Bottom tab strips */
.p-lib { height: 20px; }
.p-lib .tabs { height: 18px; background: #3d3d3d; }
.p-lib .tab { line-height: 18px; background: transparent; border: 0; color: #888; padding: 0 8px; }
.p-lib .tab + .tab { padding-left: 7px; }
.p-layers { flex: 1; border: 0; }
.p-layers .tabs { height: 100%; border: 0; }
.p-layers .tab { line-height: 20px; }
.p-lib .tabs .panel-menu, .p-layers .tabs .panel-menu { top: 5px; }

/* Video watermark, lies over everything */
.watermark {
  position: absolute;
  right: 22px;
  bottom: 22px;
  font-family: "Lato", "Open Sans", sans-serif;
  font-size: 46px;
  line-height: 1;
  font-weight: 700;
  letter-spacing: 2.400px;
  color: rgba(0, 0, 0, .45);
  -webkit-text-stroke: 1px rgba(255, 255, 255, .2);
  pointer-events: none;
}
```
